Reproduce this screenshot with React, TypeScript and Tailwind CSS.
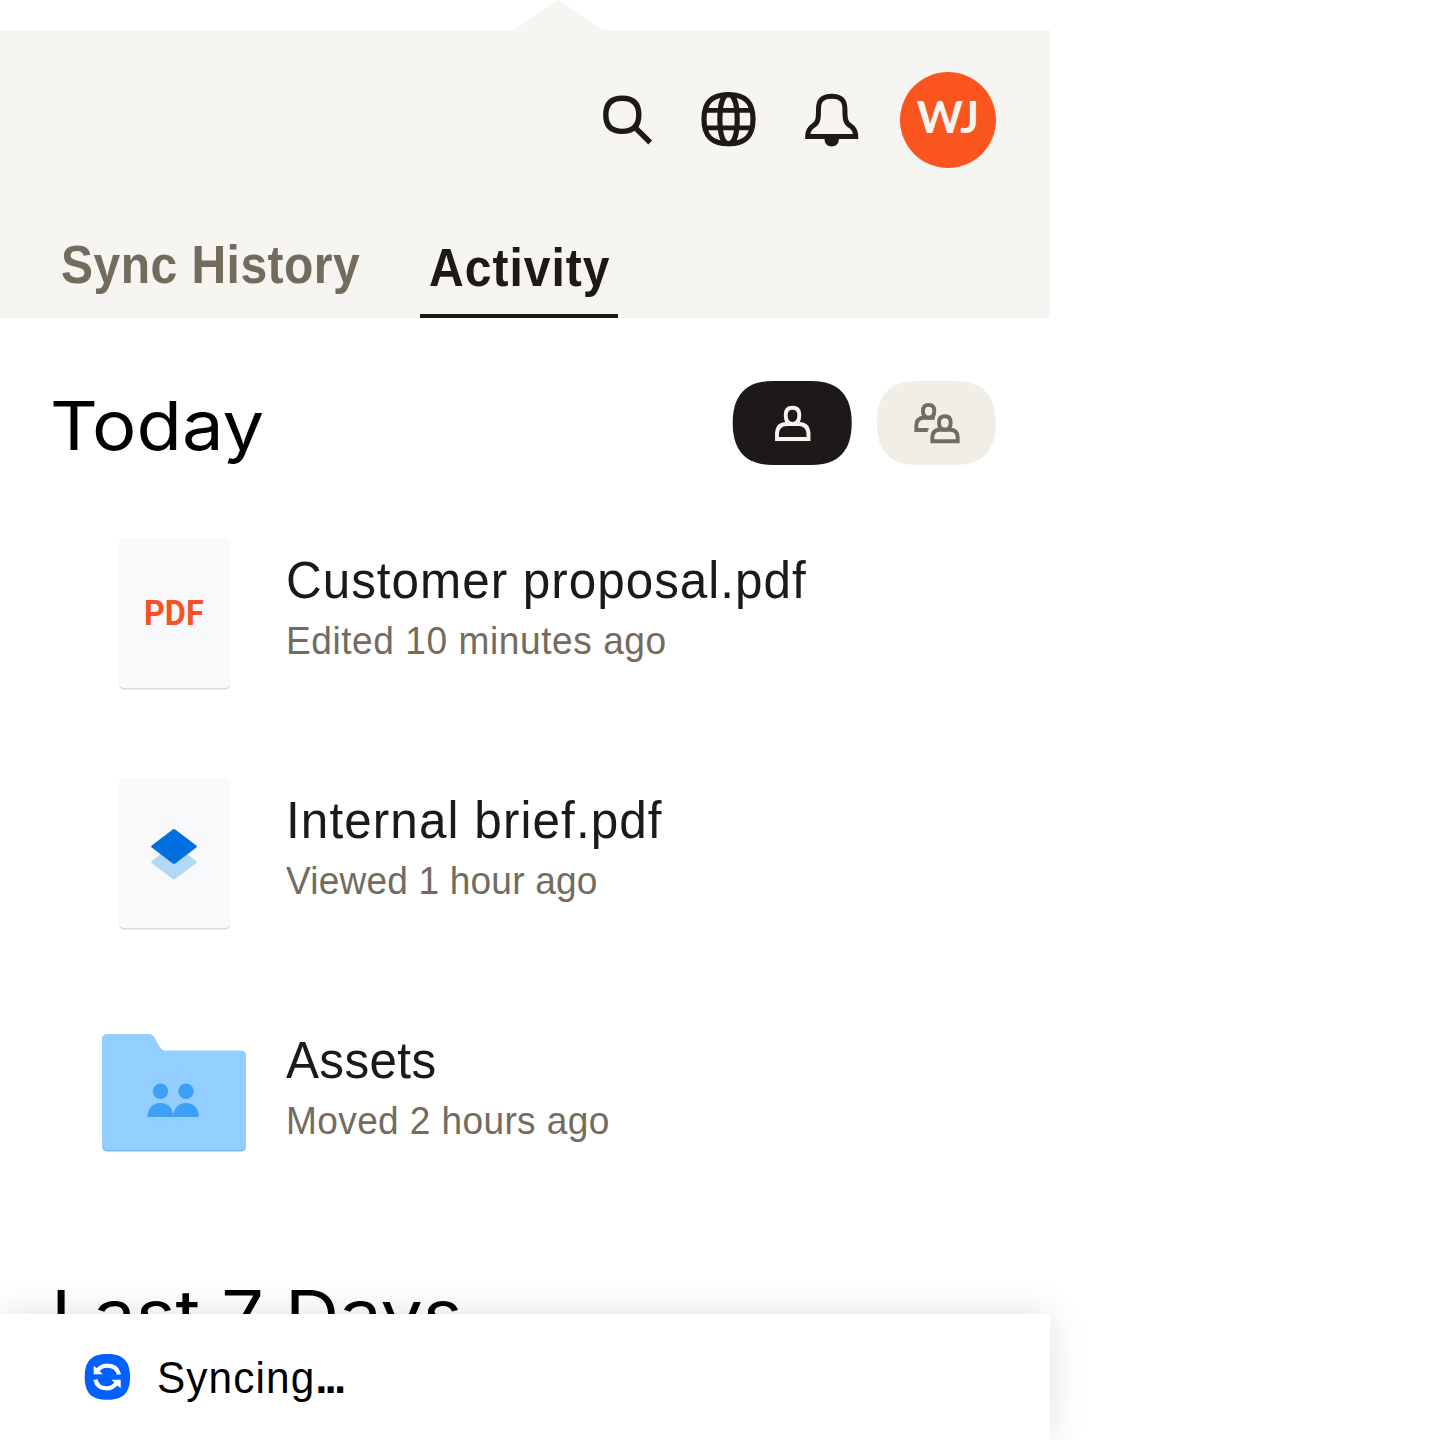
import type { ReactNode } from "react";

function SearchIcon() {
  return (
    <svg className="h-[60px] w-[60px]" viewBox="598 90 60 60" fill="none" stroke="#1e1919" strokeWidth="5.4">
      <path d="M622.3 98.2C633.2 98.2 638.8 103.9 638.8 114.8C638.8 125.7 633.2 131.400 622.3 131.400C611.4 131.400 605.8 125.7 605.8 114.8C605.8 103.9 611.4 98.2 622.3 98.2Z" />
      <path d="M635 127.300L650.2 142.500" />
    </svg>
  );
}

function GlobeIcon() {
  return (
    <svg className="h-[60px] w-[60px]" viewBox="698 90 60 60" fill="none" stroke="#1e1919" strokeWidth="5.2">
      <path d="M728.5 94.7C745.5 94.7 753 102.200 753 119.200C753 136.200 745.5 143.700 728.5 143.700C711.5 143.700 704 136.200 704 119.200C704 102.200 711.5 94.7 728.5 94.7Z" />
      <path d="M728.500 94.700C722.500 94.700 719.900 105 719.900 119.200C719.900 133.400 722.500 143.700 728.500 143.700C734.500 143.700 737.200 133.400 737.200 119.200C737.200 105 734.500 94.700 728.500 94.700Z" />
      <path d="M705 110.300H752M705 127.900H752" strokeWidth="4.8" />
    </svg>
  );
}

function BellIcon() {
  return (
    <svg className="h-[60px] w-[60px]" viewBox="802 90 60 60">
      <path
        d="M831.700 96.300C822.500 96.300 818.500 100.500 818.500 109C818.500 118 818.500 122.500 813 125.800C809.500 128 807.700 131.500 807.700 136.600H855.700C855.700 131.500 853.900 128 850.400 125.800C844.900 122.500 844.900 118 844.900 109C844.900 100.500 840.900 96.300 831.700 96.300Z"
        fill="none"
        stroke="#1e1919"
        strokeWidth="5"
      />
      <path d="M824.500 138.500H838.900C838.900 143.500 836.500 146.400 831.700 146.400C826.900 146.400 824.500 143.500 824.500 138.500Z" fill="#1e1919" />
    </svg>
  );
}

const PILL = "M40 0H79C106 0 119 14.500 119 42C119 69.500 106 84 79 84H40C13 84 0 69.500 0 42C0 14.500 13 0 40 0Z";

function PersonFilter() {
  return (
    <svg className="h-[84px] w-[120px]" viewBox="0 0 120 84">
      <path d={PILL} transform="translate(.7 0)" fill="#1e1919" />
      <g fill="none" stroke="#f7f5f2" strokeWidth="3.900">
        <path d="M60.500 26.700C56 26.700 53.700 29.200 53.700 34C53.700 39.800 56 43 60.500 43C65 43 67.300 39.800 67.300 34C67.300 29.200 65 26.700 60.500 26.700Z" />
        <path d="M45 58V53.500C45 46.500 48.500 43 55 43H66.500C73 43 76.500 46.500 76.500 53.500V58Z" />
      </g>
    </svg>
  );
}

function PeopleFilter() {
  return (
    <svg className="h-[84px] w-[120px]" viewBox="0 0 120 84">
      <path d={PILL} transform="translate(.7 0)" fill="#f1eee8" />
      <g fill="none" stroke="#736c5e" strokeWidth="3.900">
        <path d="M58.700 36.700H48.500C43 36.700 40.300 39.500 40.300 44.500V49H51.300" />
        <path d="M52.700 23.900C49 23.900 47 26 47 30C47 34.500 49 36.700 52.700 36.700C56.400 36.700 58.300 34.500 58.300 30C58.300 26 56.400 23.900 52.700 23.900Z" />
        <path d="M68.900 35.300C65 35.300 63 37.400 63 41.500C63 46.200 65 48.700 68.900 48.700C72.800 48.700 74.700 46.200 74.700 41.500C74.700 37.400 72.800 35.300 68.900 35.300Z" />
        <path d="M56.300 60.300V56.500C56.300 51.300 59 48.700 64.200 48.700H73.800C79 48.700 81.700 51.300 81.700 56.500V60.300Z" />
      </g>
      <path d="M51.200 47.050H53L51.400 50.950H51.200Z" fill="#736c5e" />
    </svg>
  );
}

function FileCard({ children }: { children: ReactNode }) {
  return (
    <div className="flex h-[150px] w-[111px] items-center justify-center rounded-[5px] bg-[#f7f9fa] shadow-[0_1.500px_0_#d9dcdf]">
      {children}
    </div>
  );
}

function PaperIcon() {
  return (
    <svg className="mt-0.5 h-[52px] w-[48px]" viewBox="150 828 48 52">
      <path d="M175.200 844.900L196.300 861Q197.500 862 196.300 863L175.200 879Q174 879.800 172.800 879L151.700 863Q150.500 862 151.700 861L172.800 844.900Z" fill="#b3d8f6" />
      <path d="M175.200 829.500L196.300 845.600Q197.500 846.600 196.300 847.600L175.200 863.600Q174 864.400 172.800 863.600L151.700 847.600Q150.500 846.600 151.700 845.600L172.800 829.500Q174 828.700 175.200 829.500Z" fill="#0070e0" />
    </svg>
  );
}

function FolderIcon() {
  return (
    <svg className="h-[118px] w-[144px]" viewBox="102 1034 144 118">
      <path d="M107.500 1034.500H149.500Q152.300 1034.500 153.800 1037L158.500 1045.500Q161.500 1051 165.500 1051H240.500Q246 1051 246 1056.500V1146Q246 1151.500 240.500 1151.500H107.500Q102 1151.500 102 1146V1040Q102 1034.500 107.500 1034.500Z" fill="#71b9f8" />
      <path d="M107.500 1034H149.500Q152.300 1034 153.800 1036.500L158.500 1045Q161.500 1050.500 165.500 1050.500H240.500Q246 1050.500 246 1056V1144.500Q246 1150 240.500 1150H107.500Q102 1150 102 1144.500V1039.500Q102 1034 107.500 1034Z" fill="#92ceff" />
      <g fill="#3d9ff5">
        <circle cx="160.500" cy="1091.300" r="7.700" />
        <circle cx="186" cy="1091.300" r="7.700" />
        <path d="M147.500 1115.500C149 1108 152.500 1103 160.500 1103C168.500 1103 172 1108 173.300 1114.500C174.600 1108 178 1103 186 1103C194 1103 197.500 1108 199 1115.500Q199 1117 197.500 1117H149Q147.500 1117 147.500 1115.500Z" />
      </g>
    </svg>
  );
}

function SyncIcon() {
  return (
    <svg className="h-[46px] w-[46px]" viewBox="0 0 46 46">
      <path d="M23.200 0C39 0 46 7 46 23C46 39 39 45.800 23.200 45.800C7.500 45.800 .700 39 .700 23C.700 7 7.500 0 23.200 0Z" fill="#0061fe" />
      <g fill="none" stroke="#fff" strokeWidth="4.200">
        <path d="M12.500 18.200C15 13.800 18.500 11.700 23.200 11.700C29.500 11.700 33.500 14.500 35 20.500" />
        <path d="M33.500 27.500C31 32.200 27.500 34.300 23 34.300C16.500 34.300 12.700 31.500 11.400 25.600" />
      </g>
      <path d="M9.700 11.700L13 14.500L18.800 20.300H9.700ZM36.700 34.300L33.400 31.500L27.500 25.700H36.700Z" fill="#fff" />
    </svg>
  );
}

type RowProps = { icon: ReactNode; title: string; detail: string; titleTracking: string; detailTracking: string };

function ActivityRow({ icon, title, detail, titleTracking, detailTracking }: RowProps) {
  return (
    <li className="flex h-60 items-center">
      <div className="ml-[102px] flex w-[144px] justify-center">{icon}</div>
      <div className="ml-10 flex flex-col pb-[9px]">
        <span className={`origin-left scale-x-[0.95] text-[52px] leading-[64px] whitespace-nowrap text-[#1e1919] ${titleTracking}`}>{title}</span>
        <span className={`mt-px origin-left scale-x-[0.95] text-[39px] leading-[56px] whitespace-nowrap text-[#736c5e] ${detailTracking}`}>{detail}</span>
      </div>
    </li>
  );
}

export default function App() {
  return (
    <div className="h-[1440px] w-[1440px] overflow-hidden bg-white font-['Liberation_Sans',Arial,sans-serif]">
      <div className="flex h-[1440px] w-[1050px] flex-col">
        <svg className="ml-[512px] h-[30px] w-[92px] shrink-0" viewBox="0 0 92 30">
          <path d="M2 30L43.500 1.300Q46.200 -.7 49 1.300L90.500 30Z" fill="#f7f5f2" />
        </svg>
        <header className="flex h-[288px] shrink-0 flex-col justify-between bg-[#f7f5f2]">
          <div className="flex items-center justify-end pt-[42px] pr-[54px]">
            <div className="flex items-center">
              <button className="mr-10"><SearchIcon /></button>
              <button className="mr-11"><GlobeIcon /></button>
              <button className="mr-[38px]"><BellIcon /></button>
            </div>
            <div className="flex h-24 w-24 items-center justify-center rounded-full bg-[#fa551e] pb-2 font-[Lato,sans-serif] text-[44px] font-bold text-[#f7f5f2]">WJ</div>
          </div>
          <nav className="flex items-end text-[54px] font-bold">
            <button className="ml-[61px] flex h-[86px] w-[299px] leading-[64px] text-[#736c5e]">
              <span className="block origin-left scale-x-[0.89] tracking-[0.500px] whitespace-nowrap">Sync History</span>
            </button>
            <button className="ml-[60px] flex h-[83px] w-[198px] border-b-4 border-[#1e1919] pl-[9px] leading-[64px] text-[#1e1919]">
              <span className="block origin-left scale-x-[0.89] tracking-[1.100px] whitespace-nowrap">Activity</span>
            </button>
          </nav>
        </header>
        <main className="h-[996px] shrink-0 overflow-hidden">
          <div className="flex h-[175px] items-center justify-between pt-[35px] pr-[54px] pl-[50px] text-black">
            <h2 className="mt-1 origin-left scale-x-[1.090] font-[Inter,sans-serif] text-[68px] leading-[80px]">Today</h2>
            <div className="flex gap-6">
              <button><PersonFilter /></button>
              <button><PeopleFilter /></button>
            </div>
          </div>
          <ul>
            <ActivityRow
              title="Customer proposal.pdf"
              detail="Edited 10 minutes ago"
              titleTracking="tracking-[1.050px]"
              detailTracking="tracking-[0.600px]"
              icon={<FileCard><span className="scale-x-[0.940] pt-px font-[Roboto,sans-serif] text-[34.500px] font-bold text-[#f75223]">PDF</span></FileCard>}
            />
            <ActivityRow title="Internal brief.pdf" detail="Viewed 1 hour ago" titleTracking="tracking-[1.150px]" detailTracking="tracking-[0.200px]" icon={<FileCard><PaperIcon /></FileCard>} />
            <ActivityRow title="Assets" detail="Moved 2 hours ago" titleTracking="tracking-[0.400px]" detailTracking="tracking-[0.400px]" icon={<FolderIcon />} />
          </ul>
          <h2 className="mt-[61px] origin-left scale-x-[1.107] pl-[46px] font-[Inter,sans-serif] text-[68px] leading-[80px] whitespace-nowrap text-black">Last 7 Days</h2>
        </main>
        <footer className="relative flex h-[126px] shrink-0 items-center bg-white pl-[84px] shadow-[0_0_36px_rgba(0,0,0,0.12)]">
          <SyncIcon />
          <span className="mt-0.5 ml-[27px] origin-left scale-x-[0.94] text-[45px] leading-[60px] tracking-[1.200px] whitespace-nowrap text-black">
            Syncing<span className="font-bold tracking-[-2.500px]">...</span>
          </span>
        </footer>
      </div>
    </div>
  );
}
